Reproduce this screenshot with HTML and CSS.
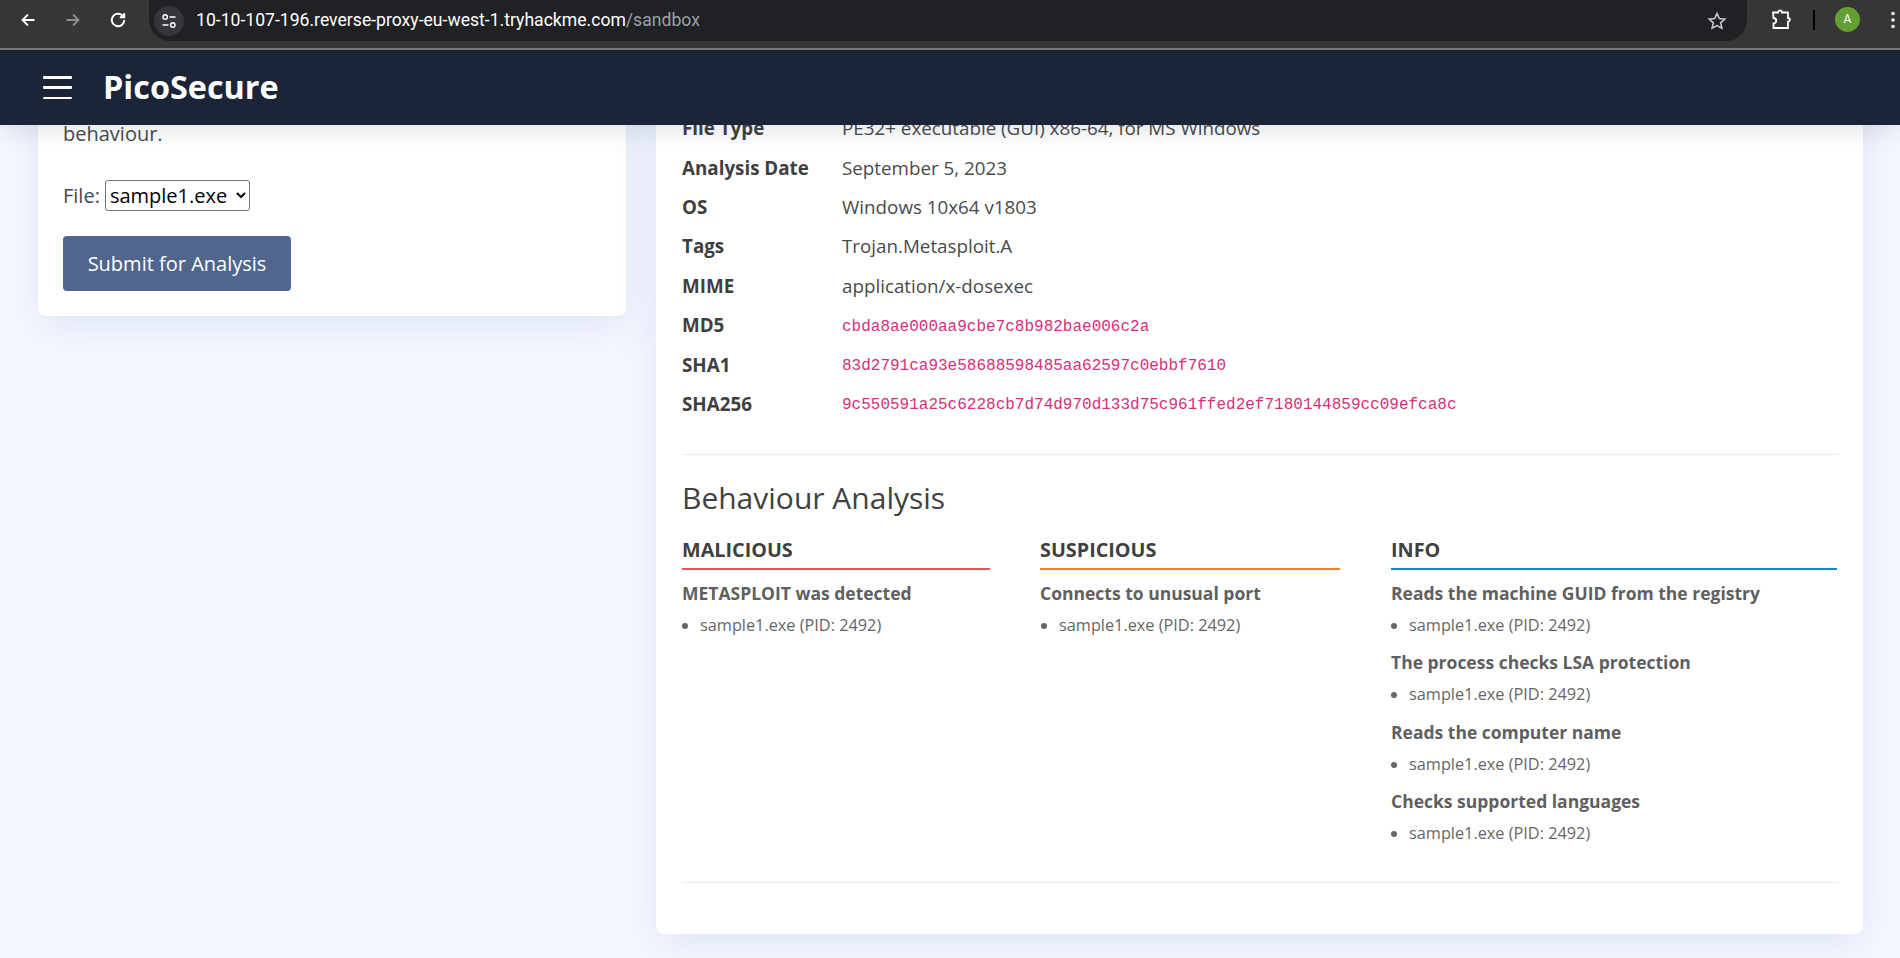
FILE: index.html
```html
<!DOCTYPE html>
<html lang="en">
<head>
<meta charset="utf-8">
<title>PicoSecure</title>
<link rel="stylesheet" href="styles.css">
</head>
<body>
<div class="browser">
  <svg class="tool-icon" viewBox="0 0 16 16" width="16" height="16"><path d="M14.5 8H2.5M8 2.5 2.5 8 8 13.5" class="stroke-white"/></svg>
  <svg class="tool-icon" viewBox="0 0 16 16" width="16" height="16"><path d="M1.5 8h12M8 2.5 13.5 8 8 13.5" class="stroke-grey"/></svg>
  <svg class="tool-icon tool-reload" viewBox="0 0 18 18" width="20" height="20"><path d="M14.6 9a5.6 5.6 0 1 1-1.7-4L14.6 6.6M14.6 2.6v4h-4" class="stroke-white"/></svg>
  <div class="urlbar">
    <span class="site-badge">
      <svg viewBox="0 0 16 16" width="16" height="16"><circle cx="4.2" cy="4" r="2.2" class="stroke-white thin"/><path d="M8.5 4h6M1.5 12h6" class="stroke-white thin"/><circle cx="11.8" cy="12" r="2.2" class="stroke-white thin"/></svg>
    </span>
    <span class="url">10-10-107-196.reverse-proxy-eu-west-1.tryhackme.com<span class="url-path">/sandbox</span></span>
    <svg class="star" viewBox="0 0 20 20" width="20" height="20"><path d="M10 2.4l2.3 5.1 5.5.6-4.1 3.7 1.2 5.5L10 14.6l-4.9 2.7 1.2-5.5L2.2 8.1l5.5-.6z" class="stroke-star"/></svg>
  </div>
  <svg class="puzzle" viewBox="0 0 22 22" width="22" height="22"><path d="M3 3.5h5a2 2 0 0 1 4 0h6v5.500a1.800 1.800 0 0 1 0 3.600V19H3.500v-4.500a2.400 2.400 0 0 0 0-5.500z" class="stroke-white"/></svg>
  <span class="separator"></span>
  <span class="avatar">A</span>
  <svg class="kebab" viewBox="0 0 4 18" width="4" height="18"><circle cx="2" cy="2.500" r="1.800"/><circle cx="2" cy="9" r="1.800"/><circle cx="2" cy="15.500" r="1.800"/></svg>
</div>
<header class="navbar">
  <span class="hamburger"><span></span><span></span><span></span></span>
  <span class="brand">PicoSecure</span>
</header>
<main class="content">
  <section class="card card-form">
    <p class="intro">behaviour.</p>
    <div class="file-row">
      <label for="file">File:</label>
      <select id="file" class="file-select"><option>sample1.exe</option></select>
    </div>
    <button class="submit" type="button">Submit for Analysis</button>
  </section>
  <section class="card card-report">
    <dl class="facts">
      <div class="fact"><dt>File Type</dt><dd>PE32+ executable (GUI) x86-64, for MS Windows</dd></div>
      <div class="fact"><dt>Analysis Date</dt><dd>September 5, 2023</dd></div>
      <div class="fact"><dt>OS</dt><dd>Windows 10x64 v1803</dd></div>
      <div class="fact"><dt>Tags</dt><dd>Trojan.Metasploit.A</dd></div>
      <div class="fact"><dt>MIME</dt><dd>application/x-dosexec</dd></div>
      <div class="fact"><dt>MD5</dt><dd><code>cbda8ae000aa9cbe7c8b982bae006c2a</code></dd></div>
      <div class="fact"><dt>SHA1</dt><dd><code>83d2791ca93e58688598485aa62597c0ebbf7610</code></dd></div>
      <div class="fact"><dt>SHA256</dt><dd><code>9c550591a25c6228cb7d74d970d133d75c961ffed2ef7180144859cc09efca8c</code></dd></div>
    </dl>
    <hr class="rule">
    <h2 class="section-title">Behaviour Analysis</h2>
    <div class="behaviour">
      <div class="column">
        <h3 class="col-head col-red">MALICIOUS</h3>
        <div class="finding"><h4>METASPLOIT was detected</h4><ul><li>sample1.exe (PID: 2492)</li></ul></div>
      </div>
      <div class="column">
        <h3 class="col-head col-orange">SUSPICIOUS</h3>
        <div class="finding"><h4>Connects to unusual port</h4><ul><li>sample1.exe (PID: 2492)</li></ul></div>
      </div>
      <div class="column">
        <h3 class="col-head col-blue">INFO</h3>
        <div class="finding"><h4>Reads the machine GUID from the registry</h4><ul><li>sample1.exe (PID: 2492)</li></ul></div>
        <div class="finding"><h4>The process checks LSA protection</h4><ul><li>sample1.exe (PID: 2492)</li></ul></div>
        <div class="finding"><h4>Reads the computer name</h4><ul><li>sample1.exe (PID: 2492)</li></ul></div>
        <div class="finding"><h4>Checks supported languages</h4><ul><li>sample1.exe (PID: 2492)</li></ul></div>
      </div>
    </div>
    <hr class="rule rule-end">
  </section>
</main>
</body>
</html>
```
FILE: styles.css
```css
* { box-sizing: border-box; }
html, body { height: 100%; }
body {
  margin: 0;
  height: 958px;
  overflow: hidden;
  background: #f5f8ff;
  font-family: "Open Sans", "Noto Sans", sans-serif;
  font-size: 18.8px;
  line-height: 27px;
  color: #4a4a4a;
  display: flex;
  flex-direction: column;
}

/* browser chrome */
.browser {
  height: 50px;
  flex: none;
  background: #363636;
  border-bottom: 2px solid #777;
  display: flex;
  align-items: flex-start;
  position: relative;
  z-index: 3;
}
.tool-icon { flex: none; margin-top: 12px; margin-left: 20px; margin-right: 9px; }
.tool-icon + .tool-icon { margin-left: 20px; }
.tool-icon.tool-reload { margin: 10px 8px 0 18px; }
.stroke-white, .stroke-grey, .stroke-star { fill: none; stroke-width: 1.8; }
.stroke-white { stroke: #fff; }
.stroke-grey { stroke: #8e8e8e; }
.stroke-star { stroke: #c4c7c5; stroke-width: 1.600; }
.thin { stroke-width: 1.400; }
.urlbar {
  width: 1598px;
  height: 41px;
  margin-left: 13px;
  background: #202124;
  border-radius: 0 0 21px 21px;
  display: flex;
  align-items: center;
  padding-left: 5px;
}
.site-badge {
  width: 30px;
  height: 30px;
  border-radius: 50%;
  background: #35363a;
  display: flex;
  align-items: center;
  justify-content: center;
  flex: none;
}
.url {
  margin-left: 12px;
  font-family: Roboto, "Noto Sans", sans-serif;
  font-size: 17.6px;
  color: #fff;
  white-space: nowrap;
}
.url-path { color: #9aa0a6; }
.star { margin-left: auto; margin-right: 20px; flex: none; }
.puzzle { flex: none; margin: 9px 0 0 23px; }
.separator { flex: none; width: 2px; height: 20px; margin: 10px 0 0 21px; background: #000; }
.avatar {
  flex: none;
  width: 25px;
  height: 25px;
  margin: 7px 0 0 20px;
  border-radius: 50%;
  background: #63a033;
  color: #fff;
  font-family: Roboto, sans-serif;
  font-size: 12px;
  line-height: 25px;
  text-align: center;
}
.kebab { flex: none; margin: 11px 0 0 31px; fill: #fff; }

/* navbar */
.navbar {
  height: 75px;
  flex: none;
  background: #1c2438;
  display: flex;
  align-items: center;
  padding-left: 43px;
  box-shadow: 0 4px 24px rgba(30, 40, 70, .14);
  position: relative;
  z-index: 2;
}
.hamburger {
  width: 29px;
  height: 23px;
  display: flex;
  flex-direction: column;
  justify-content: space-between;
}
.hamburger span { height: 2.500px; border-radius: 1px; background: #fff; }
.brand {
  margin-left: 31px;
  color: #fff;
  font-size: 32.4px;
  line-height: 38px;
  font-weight: 700;
  margin-bottom: 4px;
}

/* layout */
.content {
  flex: 1;
  min-height: 0;
  padding: 0 38px;
  display: grid;
  grid-template-columns: 588px 1207px;
  column-gap: 30px;
  align-items: start;
}
.card {
  background: #fff;
  border-radius: 8px;
  box-shadow: 0 10px 40px rgba(70, 100, 180, .13);
}
.card-form {
  margin-top: -40px;
  padding: 35px 25px 25px;
  font-size: 20px;
}
.intro { margin: 0 0 33px; }
.file-row { display: flex; align-items: center; gap: 5px; margin-bottom: 25px; height: 31px; }
.file-select {
  width: 145px;
  height: 31px;
  font-family: "Open Sans", sans-serif;
  font-size: 20px;
  color: #000;
  background: #fff;
  border: 1px solid #767676;
  border-radius: 3px;
  padding: 0;
}
.submit {
  display: block;
  width: 228px;
  height: 55px;
  background: #51668f;
  color: #fff;
  border: 0;
  border-radius: 4px;
  font-family: "Open Sans", sans-serif;
  font-size: 20px;
}

/* report */
.card-report {
  margin-top: -40px;
  padding: 24px 24px 51px 26px;
}
.facts { margin: 0; }
.fact { display: flex; align-items: center; height: 39.4px; }
dt { width: 160px; flex: none; font-weight: 700; color: #3f3f3f; }
dd { margin: 0; }
code {
  font-family: "Liberation Mono", monospace;
  font-size: 16px;
  color: #d6307c;
}
.rule { border: 0; border-top: 1px solid #ebebeb; margin: 30px 0 0; }
.section-title {
  margin: 23px 0 17px;
  font-size: 30px;
  line-height: 40px;
  font-weight: 400;
  color: #414141;
}
.behaviour {
  display: grid;
  grid-template-columns: 308px 300px 447px;
  column-gap: 50px;
  align-items: start;
  width: 1157px;
}
.column:last-child { margin-left: 1px; }
.column:nth-child(2) ul { padding-left: 19px; }
.col-head {
  margin: 0 0 8px;
  padding-bottom: 3px;
  font-size: 19.8px;
  line-height: 30px;
  font-weight: 700;
  color: #3f3f3f;
  border-bottom: 2px solid #888;
}
.col-red { border-bottom-color: #e25555; }
.col-orange { border-bottom-color: #f58216; }
.col-blue { border-bottom-color: #1285cf; }
.finding { height: 69.300px; }
.finding h4 {
  margin: 0;
  font-size: 17.5px;
  line-height: 30px;
  font-weight: 700;
  color: #5f5f5f;
}
.finding ul { margin: 2px 0 0; padding: 0 0 0 18px; }
.finding li {
  font-size: 16.3px;
  line-height: 30px;
  color: #666;
}
.rule-end { margin-top: 27px; }
```
